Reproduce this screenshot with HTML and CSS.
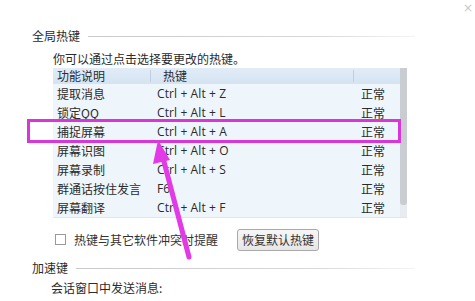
FILE: index.html
```html
<!DOCTYPE html>
<html lang="zh">
<head>
<meta charset="utf-8">
<link rel="stylesheet" href="styles.css">
</head>
<body>
<div class="page">
  <div class="close">×</div>
  <div class="group-title"><span>全局热键</span><i class="rule"></i></div>
  <div class="desc">你可以通过点击选择要更改的热键。</div>
  <div class="list">
    <div class="list-body">
      <div class="row head">
        <span class="c1">功能说明</span><span class="c2 hk">热键</span><span class="c3"></span>
      </div>
      <div class="row"><span class="c1">提取消息</span><span class="c2">Ctrl + Alt + Z</span><span class="c3">正常</span></div>
      <div class="row"><span class="c1">锁定QQ</span><span class="c2">Ctrl + Alt + L</span><span class="c3">正常</span></div>
      <div class="row"><span class="c1">捕捉屏幕</span><span class="c2">Ctrl + Alt + A</span><span class="c3">正常</span></div>
      <div class="row"><span class="c1">屏幕识图</span><span class="c2">Ctrl + Alt + O</span><span class="c3">正常</span></div>
      <div class="row"><span class="c1">屏幕录制</span><span class="c2">Ctrl + Alt + S</span><span class="c3">正常</span></div>
      <div class="row"><span class="c1">群通话按住发言</span><span class="c2">F6</span><span class="c3">正常</span></div>
      <div class="row"><span class="c1">屏幕翻译</span><span class="c2">Ctrl + Alt + F</span><span class="c3">正常</span></div>
    </div>
    <div class="scroll"><div class="thumb"></div></div>
  </div>
  <div class="opts">
    <label class="check"><span class="box"></span><span>热键与其它软件冲突时提醒</span></label>
    <button class="btn">恢复默认热键</button>
  </div>
  <div class="group-title g2"><span>加速键</span><i class="rule"></i></div>
  <div class="desc d2">会话窗口中发送消息:</div>
  <svg class="annot" width="475" height="301" viewBox="0 0 475 301">
    <rect x="28.5" y="120.5" width="371" height="21" fill="none" stroke="#d936d9" stroke-width="3"/>
    <path d="M189 257 L163 158" stroke="#e23ae6" stroke-width="5" stroke-linecap="round" fill="none"/>
    <path d="M158 140 L153 164 L170 160 Z" fill="#e23ae6"/>
  </svg>
</div>
</body>
</html>
```
FILE: styles.css
```css
html, body {
  margin: 0;
  padding: 0;
  background: #fff;
}
.page {
  position: relative;
  width: 475px;
  height: 301px;
  overflow: hidden;
  box-sizing: border-box;
  padding: 28px 60px 0 32px;
  font-family: "Noto Sans CJK SC", "Noto Sans", sans-serif;
  font-size: 12px;
  line-height: 16px;
  color: #2b2b2b;
}
.close {
  position: absolute;
  top: 0;
  right: 2px;
  font-size: 12px;
  color: #c8c8c8;
  font-family: "DejaVu Sans", sans-serif;
}
.group-title {
  display: flex;
  align-items: center;
  height: 16px;
  gap: 8px;
}
.rule {
  flex: 1;
  height: 1px;
  background: linear-gradient(to right, #c9c9c9, #d8d8d8 70%, #f4f4f4);
}
.desc {
  margin: 7px 0 0 21px;
}
.list {
  margin: 1px 0 0 21px;
  width: 354px;
  height: 149px;
  display: flex;
  background: #eef5fb;
  border-bottom: 1px solid #dfe6ee;
}
.list-body {
  flex: 1;
}
.row {
  display: flex;
  height: 19px;
  align-items: center;
  font-size: 12px;
}
.row.head {
  height: 16px;
  background: linear-gradient(#e1ecf7, #d5e4f2);
}
.c1 {
  width: 100px;
  padding-left: 4px;
  box-sizing: border-box;
  width: 104px;
}
.c2 {
  width: 204px;
  font-family: "Open Sans", "Noto Sans", sans-serif;
  font-size: 12px;
  letter-spacing: 0.1px;
}
.head .c2 {
  border-left: 1px solid #c2cfdb;
  height: 12px;
  line-height: 12px;
  padding-left: 12px;
  margin-left: -7px;
  width: 190px;
  font-family: "Noto Sans CJK SC", sans-serif;
}
.head .c3 {
  border-left: 1px solid #c2cfdb;
  height: 12px;
}
.c3 {
  padding-left: 0;
}
.scroll {
  width: 7px;
  background: #e8ecf0;
}
.thumb {
  height: 137px;
  background: #c9cdd2;
  border-radius: 0 0 3px 3px;
}
.opts {
  display: flex;
  align-items: center;
  height: 21px;
  margin-top: 11px;
}
.check {
  display: flex;
  align-items: center;
  gap: 8px;
  margin-left: 23px;
  width: 182px;
  color: #333;
}
.box {
  width: 9px;
  height: 9px;
  border: 1px solid #9a9a9a;
  background: #fff;
}
.btn {
  height: 22px;
  width: 82px;
  padding: 0;
  border: 1px solid #a9a9a9;
  border-radius: 3px;
  background: linear-gradient(#f6f6f6, #e6e6e6);
  font-family: "Noto Sans CJK SC", sans-serif;
  font-size: 12px;
  color: #333;
}
.g2 {
  margin-top: 10px;
}
.d2 {
  margin: 4px 0 0 19px;
}
.annot {
  position: absolute;
  left: 0;
  top: 0;
  pointer-events: none;
}
```
